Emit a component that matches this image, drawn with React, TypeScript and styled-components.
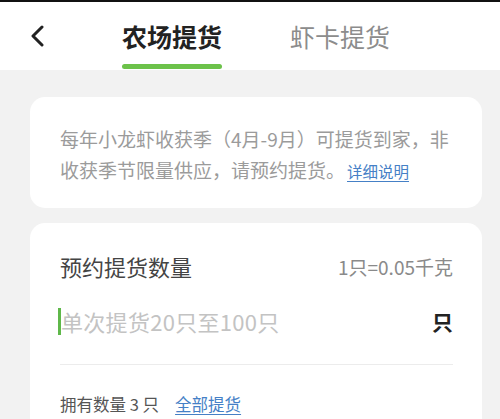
import { createGlobalStyle, styled } from "styled-components";

const GlobalStyle = createGlobalStyle`
  html, body {
    margin: 0;
    padding: 0;
    background: #f2f2f2;
  }
  body {
    font-family: "Noto Sans CJK SC", "Noto Sans", sans-serif;
    -webkit-font-smoothing: antialiased;
  }
`;

const StatusStrip = styled.div`
  height: 2px;
  background: #111;
`;

const Header = styled.header`
  display: flex;
  height: 68px;
  padding-left: 30px;
  background: #fff;
`;

const BackButton = styled.button`
  display: flex;
  align-self: flex-start;
  margin: 23px 78px 0 0;
  padding: 0;
  border: 0;
  background: none;
  cursor: pointer;
`;

const Tabs = styled.nav`
  display: flex;
  gap: 68px;
`;

const Tab = styled.div<{ $active?: boolean }>`
  display: flex;
  flex-direction: column;
  align-items: stretch;
  padding-top: 22px;
  font-size: 25px;
  line-height: 25px;
  font-weight: ${({ $active }) => ($active ? 700 : 400)};
  color: ${({ $active }) => ($active ? "#222" : "#8c8c8c")};
  white-space: nowrap;
`;

const Indicator = styled.span`
  margin-top: auto;
  margin-bottom: 1px;
  height: 5px;
  border-radius: 3px;
  background: #6cc24a;
`;

const Content = styled.main`
  display: flex;
  flex-direction: column;
  gap: 15px;
  padding: 27px 18px 0 30px;
`;

const Card = styled.section`
  background: #fff;
  border-radius: 15px;
  padding: 0 29px 0 30px;
`;

const Notice = styled.p`
  margin: 0;
  padding: 26px 0 21px;
  font-size: 19px;
  line-height: 31px;
  color: #9b9b9b;
  white-space: nowrap;
`;

const Link = styled.a<{ $size: number }>`
  margin-left: 2px;
  font-size: ${({ $size }) => $size}px;
  color: #4580c6;
  text-decoration: underline;
  text-underline-offset: 3px;
  cursor: pointer;
`;

const TitleRow = styled.div`
  display: flex;
  align-items: center;
  justify-content: space-between;
  padding-top: 28px;
  height: 30px;
  box-sizing: content-box;
`;

const Title = styled.span`
  font-size: 22px;
  color: #444;
`;

const Rate = styled.span`
  font-size: 19px;
  color: #8a8a8a;
`;

const InputRow = styled.div`
  display: flex;
  align-items: center;
  margin-top: 22px;
  height: 36px;
`;

const Caret = styled.span`
  width: 3px;
  height: 27px;
  margin-left: -2px;
  background: #5fb84a;
`;

const Placeholder = styled.span`
  flex: 1;
  font-size: 22px;
  letter-spacing: 0.3px;
  color: #c3c3c3;
`;

const Unit = styled.span`
  font-size: 21px;
  font-weight: 700;
  color: #222;
`;

const Divider = styled.hr`
  margin: 25px 0 0;
  border: 0;
  height: 1px;
  background: #ececec;
`;

const OwnedRow = styled.div`
  display: flex;
  align-items: center;
  gap: 14px;
  margin-top: 28px;
  padding-bottom: 30px;
  font-size: 16.5px;
  line-height: 22px;
  color: #555;
`;

export default function App() {
  return (
    <>
      <GlobalStyle />
      <StatusStrip />
      <Header>
        <BackButton aria-label="返回">
          <svg width="14" height="22" viewBox="0 0 14 22">
            <polyline
              points="12,2 3,11 12,20"
              fill="none"
              stroke="#222"
              strokeWidth="3"
              strokeLinecap="round"
              strokeLinejoin="round"
            />
          </svg>
        </BackButton>
        <Tabs>
          <Tab $active>
            农场提货
            <Indicator />
          </Tab>
          <Tab>虾卡提货</Tab>
        </Tabs>
      </Header>
      <Content>
        <Card>
          <Notice>
            每年小龙虾收获季（4月-9月）可提货到家，非
            <br />
            收获季节限量供应，请预约提货。<Link $size={15.5}>详细说明</Link>
          </Notice>
        </Card>
        <Card>
          <TitleRow>
            <Title>预约提货数量</Title>
            <Rate>1只=0.05千克</Rate>
          </TitleRow>
          <InputRow>
            <Caret />
            <Placeholder>单次提货20只至100只</Placeholder>
            <Unit>只</Unit>
          </InputRow>
          <Divider />
          <OwnedRow>
            <span>拥有数量 3 只</span>
            <Link $size={16.5}>全部提货</Link>
          </OwnedRow>
        </Card>
      </Content>
    </>
  );
}
